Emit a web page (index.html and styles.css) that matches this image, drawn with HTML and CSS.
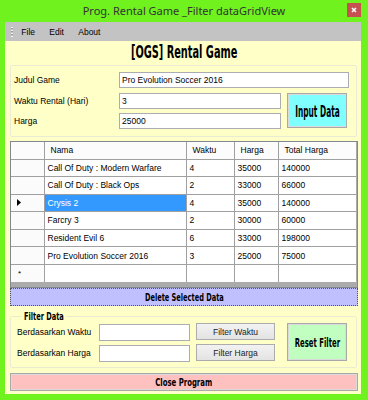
FILE: index.html
```html
<!DOCTYPE html>
<html>
<head>
<meta charset="utf-8">
<title>Prog. Rental Game _Filter dataGridView</title>
<link rel="stylesheet" href="styles.css">
</head>
<body>
<div class="window">
  <div class="titlebar">
    <span></span>
    <span class="title">Prog. Rental Game _Filter dataGridView</span>
    <span class="close-x">
      <svg width="14" height="14" viewBox="0 0 14 14"><path d="M5 5 L9 9 M9 5 L5 9" stroke="#fff" stroke-width="1.6"/></svg>
    </span>
  </div>
  <div class="client">
    <div class="menubar">
      <span class="grip"></span>
      <span class="mi">File</span>
      <span class="mi">Edit</span>
      <span class="mi">About</span>
    </div>
    <div class="content">
      <div class="heading"><span class="agency h1">[OGS] Rental Game</span></div>

      <div class="group1">
        <span class="lbl r1">Judul Game</span>
        <div class="tb tb-wide">Pro Evolution Soccer 2016</div>
        <span class="lbl r2">Waktu Rental (Hari)</span>
        <div class="tb tb-r2">3</div>
        <button class="btn3d btn-input"><span class="agency t-input">Input Data</span></button>
        <span class="lbl r3">Harga</span>
        <div class="tb tb-r3">25000</div>
      </div>

      <div class="grid">
        <table class="dgv">
          <colgroup>
            <col class="c-rh"><col class="c-nama"><col class="c-waktu"><col class="c-harga"><col class="c-total">
          </colgroup>
          <thead>
            <tr class="hdr"><th></th><th>Nama</th><th>Waktu</th><th>Harga</th><th>Total Harga</th></tr>
          </thead>
          <tbody>
            <tr><td class="rh"></td><td>Call Of Duty : Modern Warfare</td><td>4</td><td>35000</td><td>140000</td></tr>
            <tr><td class="rh"></td><td>Call Of Duty : Black Ops</td><td>2</td><td>33000</td><td>66000</td></tr>
            <tr><td class="rh"><svg class="arrow" width="4" height="7" viewBox="0 0 4 7"><path d="M0 0 L4 3.5 L0 7 Z" fill="#000"/></svg></td><td class="sel">Crysis 2</td><td>4</td><td>35000</td><td>140000</td></tr>
            <tr><td class="rh"></td><td>Farcry 3</td><td>2</td><td>30000</td><td>60000</td></tr>
            <tr><td class="rh"></td><td>Resident Evil 6</td><td>6</td><td>33000</td><td>198000</td></tr>
            <tr><td class="rh"></td><td>Pro Evolution Soccer 2016</td><td>3</td><td>25000</td><td>75000</td></tr>
            <tr><td class="rh star">*</td><td></td><td></td><td></td><td></td></tr>
          </tbody>
        </table>
      </div>

      <button class="btn-delete"><span class="agency t-delete">Delete Selected Data</span></button>

      <fieldset class="filter">
        <legend class="legend"><span class="agency t-filter">Filter Data</span></legend>
        <div class="filter-grid">
          <span class="lbl f1">Berdasarkan Waktu</span>
          <div class="tb tb-f f1"></div>
          <button class="btn-std f1">Filter Waktu</button>
          <button class="btn3d btn-reset"><span class="agency t-reset">Reset Filter</span></button>
          <span class="lbl f2">Berdasarkan Harga</span>
          <div class="tb tb-f f2"></div>
          <button class="btn-std f2">Filter Harga</button>
        </div>
      </fieldset>

      <button class="btn3d btn-close"><span class="agency t-close">Close Program</span></button>
    </div>
  </div>
</div>
</body>
</html>
```
FILE: styles.css
```css
* { box-sizing: border-box; }
html, body {
  margin: 0;
  padding: 0;
}
body {
  width: 368px;
  height: 400px;
  background: #6ff21e;
  font-family: "Liberation Sans", Arial, sans-serif;
  font-size: 8.5px;
  color: #000;
  overflow: hidden;
}
.window {
  height: 400px;
  display: flex;
  flex-direction: column;
}
.titlebar {
  height: 22px;
  display: grid;
  grid-template-columns: 1fr auto 1fr;
  align-items: center;
}
.title {
  font-family: "Noto Sans", "Open Sans", sans-serif;
  font-size: 11px;
  color: #333;
  white-space: nowrap;
  padding-bottom: 1px;
}
.close-x {
  justify-self: end;
  align-self: start;
  margin-top: 3px;
  margin-right: 7px;
  width: 14px;
  height: 14px;
  background: #c75050;
  display: block;
}
.close-x svg { display: block; }

.client {
  margin: 0 7px 6px 5px;
  flex: 1;
  background: #ffffc8;
  display: flex;
  flex-direction: column;
}
.menubar {
  height: 19px;
  background: #c3c3c3;
  display: flex;
  align-items: center;
  padding-left: 6px;
  gap: 14.3px;
}
.grip {
  width: 2px;
  height: 10px;
  margin-right: -6px;
  background: repeating-linear-gradient(to bottom, #f4f4f4 0 1px, #9a9a9a 1px 2px, transparent 2px 3px);
}
.mi { white-space: nowrap; }

.content {
  flex: 1;
  display: flex;
  flex-direction: column;
  padding: 0 3px 3px 5px;
}
.heading {
  height: 24px;
  display: flex;
  justify-content: center;
  align-items: center;
  padding-bottom: 2px;
}
.agency {
  display: inline-block;
  font-family: "DejaVu Sans Condensed", "DejaVu Sans", sans-serif;
  font-weight: bold;
  color: #000;
  white-space: nowrap;
}
.h1 { font-size: 17px; transform: scaleX(0.64); }
.t-input { font-size: 15px; transform: scaleX(0.55); }
.t-delete { font-size: 10.5px; transform: scaleX(0.7); }
.t-filter { font-size: 10.5px; transform: scaleX(0.7); transform-origin: left center; }
.t-reset { font-size: 13px; transform: scaleX(0.59); }
.t-close { font-size: 11px; transform: scaleX(0.7); }

.group1 {
  margin-right: 1px;
  height: 72px;
  border: 1px solid #ebebd2;
  border-radius: 2px;
  padding: 6px 0 0 3px;
  display: grid;
  grid-template-columns: 105px 162px 6px 60px;
  grid-template-rows: 16px 16px 16px;
  row-gap: 4.5px;
  align-items: center;
}
.lbl { white-space: nowrap; grid-column: 1; }
.r1 { grid-row: 1; }
.r2 { grid-row: 2; }
.r3 { grid-row: 3; }
.tb {
  height: 16px;
  background: #fff;
  border: 1px solid #abadb3;
  padding: 0 2px;
  line-height: 14px;
  white-space: nowrap;
  overflow: hidden;
}
.tb-wide { grid-column: 2 / 5; grid-row: 1; width: 230px; }
.tb-r2 { grid-column: 2; grid-row: 2; }
.tb-r3 { grid-column: 2; grid-row: 3; }
.btn3d {
  margin: 0;
  padding: 0;
  border: 1px solid #a9a9a9;
  box-shadow: inset 0 0 0 1px #dadada;
  font: inherit;
  display: flex;
  align-items: center;
  justify-content: center;
  overflow: visible;
}
.btn-input {
  grid-column: 4;
  grid-row: 2 / 4;
  height: 35px;
  width: 60px;
  background: #80ffff;
  padding-top: 2px;
}

.grid {
  margin-top: 4px;
  height: 147px;
  background: #ababab;
  border: 1px solid #828790;
  overflow: hidden;
}
.dgv {
  border-collapse: collapse;
  table-layout: fixed;
  width: 345px;
  border-style: hidden;
}
.c-rh { width: 33px; }
.c-nama { width: 142px; }
.c-waktu { width: 48px; }
.c-harga { width: 44px; }
.c-total { width: 78px; }
.dgv th, .dgv td {
  border: 1px solid #a0a0a0;
  padding: 0 3px;
  white-space: nowrap;
  overflow: hidden;
  font-weight: normal;
  text-align: left;
  vertical-align: middle;
  background: #fff;
  font-size: 8.5px;
}
.dgv th { padding-left: 6px; background: #fcfcfc; }
.hdr { height: 17px; }
.dgv tbody tr { height: 17.57px; }
.dgv td.rh { background: #fbfbfb; padding-left: 6px; }
.dgv td.sel { background: #3399ff; color: #fff; }
.arrow { display: block; }
.dgv td.star { padding-left: 7px; font-size: 8px; }

.btn-delete {
  margin: 0;
  padding: 0 0 1px;
  height: 18px;
  background: #c0c0ff;
  border: 1px dotted #555;
  font: inherit;
  display: flex;
  align-items: center;
  justify-content: center;
}

.filter {
  margin: 4px 1px 0 0;
  padding: 1px 0 5px 6px;
  border: 1px solid #ebebd2;
  border-radius: 2px;
  min-width: 0;
}
.legend {
  margin-left: 5px;
  padding: 0 2px;
  width: 44px;
  height: 12px;
  line-height: 12px;
  overflow: visible;
}
.filter-grid {
  display: grid;
  grid-template-columns: 82px 91px 6px 79px 12px 60px;
  grid-template-rows: 18px 18px;
  row-gap: 3px;
  align-items: center;
}
.f1 { grid-row: 1; }
.f2 { grid-row: 2; }
.tb-f { grid-column: 2; height: 17px; align-self: end; }
.btn-std {
  grid-column: 4;
  align-self: start;
  height: 17px;
  margin: 0;
  padding: 0;
  font: inherit;
  color: #222;
  background: linear-gradient(#f2f2f2, #e3e3e3);
  border: 1px solid #acacac;
}
.btn-reset {
  grid-column: 6;
  grid-row: 1 / 3;
  height: 38px;
  align-self: start;
  background: #c0ffc0;
}

.btn-close {
  margin: 5px 0 0 0;
  height: 18px;
  background: #ffc0c0;
}
```
